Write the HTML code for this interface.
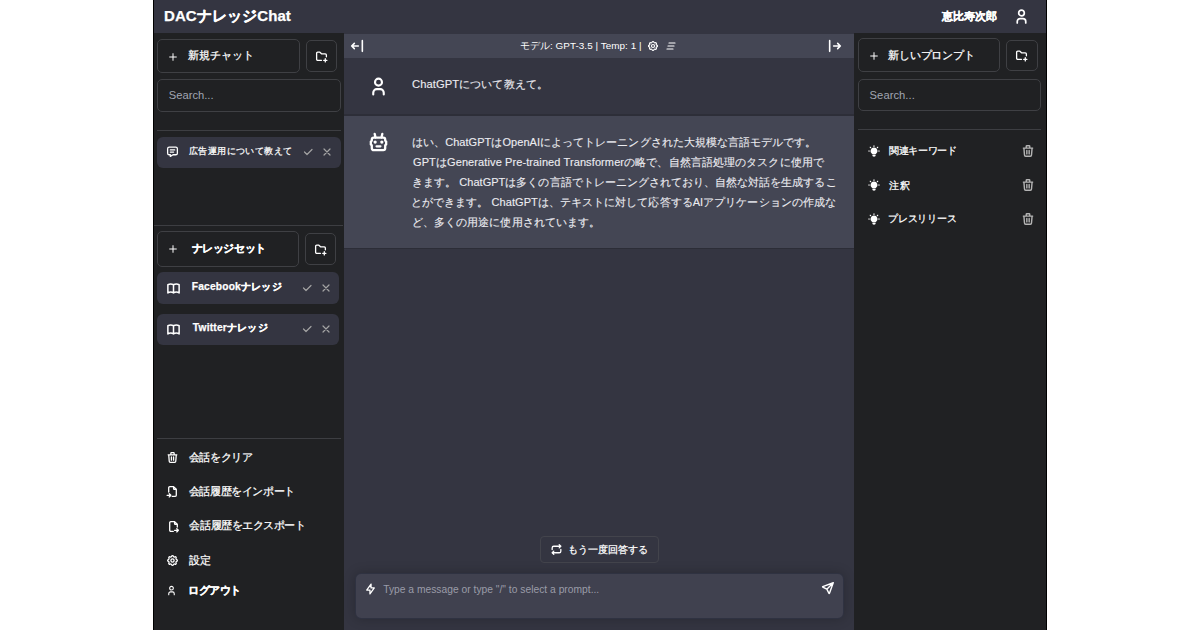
<!DOCTYPE html>
<html lang="ja">
<head>
<meta charset="utf-8">
<style>
*{box-sizing:border-box;margin:0;padding:0}
html,body{width:1200px;height:630px;overflow:hidden;background:#fff;font-family:"Liberation Sans",sans-serif;color:#fff}
.a{position:absolute}
svg{position:absolute;fill:none;stroke:#fff;stroke-width:2.4;stroke-linecap:round;stroke-linejoin:round}
.t{position:absolute;white-space:nowrap;line-height:1;-webkit-text-stroke:0.25px currentColor}
#app{position:absolute;left:153px;top:0;width:894px;height:630px;background:#343541}
#hdr{position:absolute;left:153px;top:0;width:894px;height:33px;background:#343541}
#ls{position:absolute;left:153px;top:33px;width:191px;height:597px;background:#202123}
#rs{position:absolute;left:854px;top:33px;width:193px;height:597px;background:#202123}
#chat{position:absolute;left:344px;top:33px;width:510px;height:597px;background:#343541}
.bx{position:absolute;border:1px solid #3f4044;border-radius:5px}
.item{position:absolute;background:#343541;border-radius:6px}
.ln{position:absolute;height:1px;background:#3d3e42}
</style>
</head>
<body>
<div id="app"></div>
<div id="hdr"></div>
<div class="t" style="left:164.0px;top:8px;font-size:15px;font-weight:bold;letter-spacing:0.100px">DACナレッジChat</div>
<div class="t" style="left:942.0px;top:11px;font-size:11px;font-weight:bold">恵比寿次郎</div>
<svg style="left:1012.5px;top:7.8px;width:17px;height:17px" viewBox="0 0 24 24" stroke-width="3"><path d="M8 7a4 4 0 1 0 8 0a4 4 0 0 0 -8 0M6 21v-2a4 4 0 0 1 4 -4h4a4 4 0 0 1 4 4v2"/></svg>

<!-- left sidebar -->
<div id="ls"></div>
<div class="bx" style="left:157px;top:39px;width:143px;height:34px"></div>
<svg style="left:167.5px;top:52px;width:10px;height:10px" viewBox="0 0 24 24" stroke-width="3.2"><path d="M12 4v16M4 12h16"/></svg>
<div class="t" style="left:187.6px;top:50px;font-size:11px">新規チャット</div>
<div class="bx" style="left:306px;top:40px;width:31px;height:32px"></div>
<svg style="left:315px;top:50px;width:13px;height:13px" viewBox="0 0 24 24" stroke-width="2.9"><path d="M12 19h-7a2 2 0 0 1 -2 -2v-11a2 2 0 0 1 2 -2h4l3 3h7a2 2 0 0 1 2 2v3.5M16 19h6M19 16v6"/></svg>
<div class="bx" style="left:157px;top:79px;width:184px;height:33px"></div>
<div class="t" style="left:168.8px;top:90px;font-size:11.2px;color:#a0a6b2;-webkit-text-stroke:0">Search...</div>
<div class="ln" style="left:157px;top:130px;width:184px"></div>
<div class="item" style="left:157px;top:137px;width:184px;height:31px"></div>
<svg style="left:166px;top:145px;width:13px;height:13px" viewBox="0 0 24 24" stroke-width="2.6"><path d="M8 9h8M8 13h6M18 4a3 3 0 0 1 3 3v8a3 3 0 0 1 -3 3h-5l-5 3v-3h-2a3 3 0 0 1 -3 -3v-8a3 3 0 0 1 3 -3h12z"/></svg>
<div class="t" style="left:188.8px;top:147px;font-size:9.3px;letter-spacing:0.440px">広告運用について教えて</div>
<svg style="left:302px;top:146px;width:12px;height:12px;stroke:#a3a3a3" viewBox="0 0 24 24" stroke-width="2.2"><path d="M5 12l5 5l10 -10"/></svg>
<svg style="left:321px;top:146px;width:12px;height:12px;stroke:#a3a3a3" viewBox="0 0 24 24" stroke-width="2.2"><path d="M18 6l-12 12M6 6l12 12"/></svg>

<div class="ln" style="left:154px;top:225px;width:189px"></div>
<div class="bx" style="left:157px;top:231px;width:142px;height:36px"></div>
<svg style="left:167.7px;top:244px;width:10px;height:10px" viewBox="0 0 24 24" stroke-width="3.2"><path d="M12 4v16M4 12h16"/></svg>
<div class="t" style="left:191.6px;top:243px;font-size:10.5px;font-weight:bold;letter-spacing:-0.400px">ナレッジセット</div>
<div class="bx" style="left:305px;top:233px;width:31px;height:32px"></div>
<svg style="left:314px;top:243px;width:13px;height:13px" viewBox="0 0 24 24" stroke-width="2.9"><path d="M12 19h-7a2 2 0 0 1 -2 -2v-11a2 2 0 0 1 2 -2h4l3 3h7a2 2 0 0 1 2 2v3.5M16 19h6M19 16v6"/></svg>

<div class="item" style="left:157px;top:272px;width:182px;height:32px"></div>
<svg style="left:166px;top:280.8px;width:15px;height:15px" viewBox="0 0 24 24" stroke-width="3.5"><path d="M3 19a9 9 0 0 1 9 0a9 9 0 0 1 9 0M3 6a9 9 0 0 1 9 0a9 9 0 0 1 9 0M3 6v13M12 6v13M21 6v13"/></svg>
<div class="t" style="left:191.8px;top:282px;font-size:10.2px;font-weight:bold;letter-spacing:0.200px">Facebookナレッジ</div>
<svg style="left:301px;top:282px;width:12px;height:12px;stroke:#a3a3a3" viewBox="0 0 24 24" stroke-width="2.2"><path d="M5 12l5 5l10 -10"/></svg>
<svg style="left:320px;top:282px;width:12px;height:12px;stroke:#a3a3a3" viewBox="0 0 24 24" stroke-width="2.2"><path d="M18 6l-12 12M6 6l12 12"/></svg>

<div class="item" style="left:157px;top:314px;width:182px;height:31px"></div>
<svg style="left:166px;top:321.8px;width:15px;height:15px" viewBox="0 0 24 24" stroke-width="3.5"><path d="M3 19a9 9 0 0 1 9 0a9 9 0 0 1 9 0M3 6a9 9 0 0 1 9 0a9 9 0 0 1 9 0M3 6v13M12 6v13M21 6v13"/></svg>
<div class="t" style="left:192.8px;top:323px;font-size:10.2px;font-weight:bold;letter-spacing:0.220px">Twitterナレッジ</div>
<svg style="left:301px;top:323px;width:12px;height:12px;stroke:#a3a3a3" viewBox="0 0 24 24" stroke-width="2.2"><path d="M5 12l5 5l10 -10"/></svg>
<svg style="left:320px;top:323px;width:12px;height:12px;stroke:#a3a3a3" viewBox="0 0 24 24" stroke-width="2.2"><path d="M18 6l-12 12M6 6l12 12"/></svg>

<div class="ln" style="left:157px;top:438px;width:184px"></div>
<svg style="left:166px;top:451px;width:13px;height:13px" viewBox="0 0 24 24" stroke-width="2.6"><path d="M4 7h16M10 11v6M14 11v6M5 7l1 12a2 2 0 0 0 2 2h8a2 2 0 0 0 2 -2l1 -12M9 7v-3a1 1 0 0 1 1 -1h4a1 1 0 0 1 1 1v3"/></svg>
<div class="t" style="left:188.8px;top:452px;font-size:10.5px;letter-spacing:-0.400px">会話をクリア</div>
<svg style="left:166px;top:485px;width:13px;height:13px" viewBox="0 0 24 24" stroke-width="2.6"><path d="M14 3v4a1 1 0 0 0 1 1h4M5 13v-8a2 2 0 0 1 2 -2h7l5 5v11a2 2 0 0 1 -2 2h-5.5m-9.5 -2h7m-3 -3l3 3l-3 3"/></svg>
<div class="t" style="left:188.8px;top:486px;font-size:10.5px;letter-spacing:-0.400px">会話履歴をインポート</div>
<svg style="left:167px;top:520px;width:13px;height:13px" viewBox="0 0 24 24" stroke-width="2.6"><path d="M14 3v4a1 1 0 0 0 1 1h4M11.5 21h-4.5a2 2 0 0 1 -2 -2v-14a2 2 0 0 1 2 -2h7l5 5v5m-5 6h7m-3 -3l3 3l-3 3"/></svg>
<div class="t" style="left:189.4px;top:520px;font-size:10.5px;letter-spacing:-0.440px">会話履歴をエクスポート</div>
<svg style="left:166px;top:554px;width:13px;height:13px" viewBox="0 0 24 24" stroke-width="2.8"><path d="M10.325 4.317c.426 -1.756 2.924 -1.756 3.35 0a1.724 1.724 0 0 0 2.573 1.066c1.543 -.94 3.31 .826 2.37 2.37a1.724 1.724 0 0 0 1.065 2.572c1.756 .426 1.756 2.924 0 3.35a1.724 1.724 0 0 0 -1.066 2.573c.94 1.543 -.826 3.31 -2.37 2.37a1.724 1.724 0 0 0 -2.572 1.065c-.426 1.756 -2.924 1.756 -3.35 0a1.724 1.724 0 0 0 -2.573 -1.066c-1.543 .94 -3.31 -.826 -2.37 -2.37a1.724 1.724 0 0 0 -1.065 -2.572c-1.756 -.426 -1.756 -2.924 0 -3.35a1.724 1.724 0 0 0 1.066 -2.573c-.94 -1.543 .826 -3.31 2.37 -2.37c1 .608 2.296 .07 2.572 -1.065zM9 12a3 3 0 1 0 6 0a3 3 0 0 0 -6 0"/></svg>
<div class="t" style="left:189.0px;top:555px;font-size:10.5px">設定</div>
<svg style="left:166px;top:585px;width:11px;height:11px" viewBox="0 0 24 24" stroke-width="3.2"><path d="M8 7a4 4 0 1 0 8 0a4 4 0 0 0 -8 0M6 21v-2a4 4 0 0 1 4 -4h4a4 4 0 0 1 4 4v2"/></svg>
<div class="t" style="left:188.0px;top:585px;font-size:10.5px;font-weight:bold;letter-spacing:-0.500px">ログアウト</div>

<!-- chat -->
<div id="chat"></div>
<div class="a" style="left:344px;top:34px;width:510px;height:24px;background:#444654"></div>
<svg style="left:349px;top:38px;width:16px;height:16px" viewBox="0 0 24 24" stroke-width="2.4"><path d="M4 12h10M4 12l4 4M4 12l4 -4M20 4v16"/></svg>
<div class="t" style="left:519.8px;top:41px;font-size:9.9px;letter-spacing:0.052px;-webkit-text-stroke:0">モデル: GPT-3.5 | Temp: 1 |</div>
<svg style="left:647px;top:40px;width:12px;height:12px" viewBox="0 0 24 24" stroke-width="2.6"><path d="M10.325 4.317c.426 -1.756 2.924 -1.756 3.35 0a1.724 1.724 0 0 0 2.573 1.066c1.543 -.94 3.31 .826 2.37 2.37a1.724 1.724 0 0 0 1.065 2.572c1.756 .426 1.756 2.924 0 3.35a1.724 1.724 0 0 0 -1.066 2.573c.94 1.543 -.826 3.31 -2.37 2.37a1.724 1.724 0 0 0 -2.572 1.065c-.426 1.756 -2.924 1.756 -3.35 0a1.724 1.724 0 0 0 -2.573 -1.066c-1.543 .94 -3.31 -.826 -2.37 -2.37a1.724 1.724 0 0 0 -1.065 -2.572c-1.756 -.426 -1.756 -2.924 0 -3.35a1.724 1.724 0 0 0 1.066 -2.573c-.94 -1.543 .826 -3.31 2.37 -2.37c1 .608 2.296 .07 2.572 -1.065zM9 12a3 3 0 1 0 6 0a3 3 0 0 0 -6 0"/></svg>
<svg style="left:665px;top:40px;width:12px;height:12px" viewBox="0 0 24 24" stroke-width="2.4"><path d="M8 6h12M6 12h12M4 18h12"/></svg>
<svg style="left:827px;top:38px;width:16px;height:16px" viewBox="0 0 24 24" stroke-width="2.4"><path d="M20 12h-10M20 12l-4 4M20 12l-4 -4M4 4v16"/></svg>

<div class="a" style="left:344px;top:114px;width:510px;height:2px;background:#2d2e38"></div>
<svg style="left:368px;top:76px;width:21px;height:21px" viewBox="0 0 24 24" stroke-width="2.6"><path d="M8 7a4 4 0 1 0 8 0a4 4 0 0 0 -8 0M6 21v-2a4 4 0 0 1 4 -4h4a4 4 0 0 1 4 4v2"/></svg>
<div class="t" style="left:412.0px;top:79px;font-size:11.2px;color:#ececf1;letter-spacing:0.086px;-webkit-text-stroke:0.12px currentColor">ChatGPTについて教えて。</div>

<div class="a" style="left:344px;top:116px;width:510px;height:132px;background:#444654"></div>
<div class="a" style="left:344px;top:248px;width:510px;height:1px;background:#2c2d37"></div>
<svg style="left:367px;top:131px;width:23px;height:23px" viewBox="0 0 24 24" stroke-width="2.6"><path d="M7 7h10a2 2 0 0 1 2 2v1l1 1v3l-1 1v3a2 2 0 0 1 -2 2h-10a2 2 0 0 1 -2 -2v-3l-1 -1v-3l1 -1v-1a2 2 0 0 1 2 -2zM10 16h4M8.5 11.5m-.5 0a.5 .5 0 1 0 1 0a.5 .5 0 1 0 -1 0M15.5 11.5m-.5 0a.5 .5 0 1 0 1 0a.5 .5 0 1 0 -1 0M9 7l-1 -4M15 7l1 -4"/></svg>
<div class="t" style="left:412.0px;top:137px;font-size:11px;color:#ececf1;letter-spacing:0.054px;-webkit-text-stroke:0.12px currentColor">はい、ChatGPTはOpenAIによってトレーニングされた大規模な言語モデルです。</div>
<div class="t" style="left:413.0px;top:157px;font-size:11px;color:#ececf1;letter-spacing:0.102px;-webkit-text-stroke:0.12px currentColor">GPTはGenerative Pre-trained Transformerの略で、自然言語処理のタスクに使用で</div>
<div class="t" style="left:412.0px;top:177px;font-size:11px;color:#ececf1;letter-spacing:0.039px;-webkit-text-stroke:0.12px currentColor">きます。 ChatGPTは多くの言語でトレーニングされており、自然な対話を生成するこ</div>
<div class="t" style="left:411.0px;top:197px;font-size:11px;color:#ececf1;letter-spacing:0.062px;-webkit-text-stroke:0.12px currentColor">とができます。 ChatGPTは、テキストに対して応答するAIアプリケーションの作成な</div>
<div class="t" style="left:412.0px;top:217px;font-size:11px;color:#ececf1;letter-spacing:0.062px;-webkit-text-stroke:0.12px currentColor">ど、多くの用途に使用されています。</div>

<div class="bx" style="left:540px;top:536px;width:119px;height:27px;border-color:#43444c;border-radius:4px"></div>
<svg style="left:550px;top:543px;width:13px;height:13px" viewBox="0 0 24 24" stroke-width="2.6"><path d="M4 12v-3a3 3 0 0 1 3 -3h13m-3 -3l3 3l-3 3M20 12v3a3 3 0 0 1 -3 3h-13m3 3l-3 -3l3 -3"/></svg>
<div class="t" style="left:568.2px;top:545px;font-size:9.6px">もう一度回答する</div>

<div class="a" style="left:355px;top:573px;width:489px;height:46px;background:#40414f;border-radius:6px;border:1px solid rgba(17,24,39,0.35);box-shadow:0 0 12px rgba(0,0,0,0.22)"></div>
<svg style="left:364px;top:582px;width:13px;height:14px" viewBox="0 0 24 24" stroke="#c5c6cc" stroke-width="2"><path d="M13 3v7h6l-8 11v-7h-6l8 -11"/></svg>
<div class="t" style="left:383.2px;top:585px;font-size:10.25px;color:#9a9ca8;letter-spacing:0.017px;-webkit-text-stroke:0">Type a message or type "/" to select a prompt...</div>
<svg style="left:821px;top:581px;width:14px;height:14px" viewBox="0 0 24 24" stroke="#c8c9d0" stroke-width="2"><path d="M10 14l11 -11M21 3l-6.5 18a.55 .55 0 0 1 -1 0l-3.5 -7l-7 -3.5a.55 .55 0 0 1 0 -1l18 -6.5"/></svg>

<!-- right sidebar -->
<div id="rs"></div>
<div class="bx" style="left:858px;top:38px;width:142px;height:34px"></div>
<svg style="left:869px;top:50.5px;width:10px;height:10px" viewBox="0 0 24 24" stroke-width="3.2"><path d="M12 4v16M4 12h16"/></svg>
<div class="t" style="left:888.4px;top:50px;font-size:11px;letter-spacing:-0.229px">新しいプロンプト</div>
<div class="bx" style="left:1006px;top:40px;width:32px;height:31px"></div>
<svg style="left:1015px;top:49px;width:13px;height:13px" viewBox="0 0 24 24" stroke-width="2.9"><path d="M12 19h-7a2 2 0 0 1 -2 -2v-11a2 2 0 0 1 2 -2h4l3 3h7a2 2 0 0 1 2 2v3.5M16 19h6M19 16v6"/></svg>
<div class="bx" style="left:858px;top:79px;width:183px;height:32px"></div>
<div class="t" style="left:869.6px;top:90px;font-size:11.2px;color:#a0a6b2;letter-spacing:0.050px;-webkit-text-stroke:0">Search...</div>
<div class="ln" style="left:858px;top:129px;width:183px"></div>
<div class="t" style="left:889.0px;top:146px;font-size:10px;letter-spacing:-0.333px">関連キーワード</div>
<div class="t" style="left:889.0px;top:181px;font-size:10px;letter-spacing:0.800px">注釈</div>
<div class="t" style="left:888.0px;top:214px;font-size:10px;letter-spacing:-0.167px">プレスリリース</div>

<svg style="left:867px;top:144px;width:14px;height:14px;stroke:none;fill:#fff" viewBox="0 0 24 24"><path d="M4 11a1 1 0 0 1 .117 1.993l-.117 .007h-1a1 1 0 0 1 -.117 -1.993l.117 -.007h1z"/><path d="M12 2a1 1 0 0 1 .993 .883l.007 .117v1a1 1 0 0 1 -1.993 .117l-.007 -.117v-1a1 1 0 0 1 1 -1z"/><path d="M21 11a1 1 0 0 1 .117 1.993l-.117 .007h-1a1 1 0 0 1 -.117 -1.993l.117 -.007h1z"/><path d="M4.893 4.893a1 1 0 0 1 1.32 -.083l.094 .083l.7 .7a1 1 0 0 1 -1.32 1.497l-.094 -.083l-.7 -.7a1 1 0 0 1 0 -1.414z"/><path d="M17.693 4.893a1 1 0 0 1 1.497 1.32l-.083 .094l-.7 .7a1 1 0 0 1 -1.497 -1.32l.083 -.094l.7 -.7z"/><path d="M14 18a1 1 0 0 1 1 1a3 3 0 0 1 -6 0a1 1 0 0 1 .883 -.993l.117 -.007h4z"/><path d="M12 6a6 6 0 0 1 3.6 10.8a1 1 0 0 1 -.471 .192l-.129 .008h-6a1 1 0 0 1 -.6 -.2a6 6 0 0 1 3.6 -10.8z"/></svg>
<svg style="left:1021px;top:144px;width:14px;height:14px;stroke:#b4b4b4" viewBox="0 0 24 24"><path d="M4 7h16M10 11v6M14 11v6M5 7l1 12a2 2 0 0 0 2 2h8a2 2 0 0 0 2 -2l1 -12M9 7v-3a1 1 0 0 1 1 -1h4a1 1 0 0 1 1 1v3"/></svg>
<svg style="left:867px;top:178px;width:14px;height:14px;stroke:none;fill:#fff" viewBox="0 0 24 24"><path d="M4 11a1 1 0 0 1 .117 1.993l-.117 .007h-1a1 1 0 0 1 -.117 -1.993l.117 -.007h1z"/><path d="M12 2a1 1 0 0 1 .993 .883l.007 .117v1a1 1 0 0 1 -1.993 .117l-.007 -.117v-1a1 1 0 0 1 1 -1z"/><path d="M21 11a1 1 0 0 1 .117 1.993l-.117 .007h-1a1 1 0 0 1 -.117 -1.993l.117 -.007h1z"/><path d="M4.893 4.893a1 1 0 0 1 1.32 -.083l.094 .083l.7 .7a1 1 0 0 1 -1.32 1.497l-.094 -.083l-.7 -.7a1 1 0 0 1 0 -1.414z"/><path d="M17.693 4.893a1 1 0 0 1 1.497 1.32l-.083 .094l-.7 .7a1 1 0 0 1 -1.497 -1.32l.083 -.094l.7 -.7z"/><path d="M14 18a1 1 0 0 1 1 1a3 3 0 0 1 -6 0a1 1 0 0 1 .883 -.993l.117 -.007h4z"/><path d="M12 6a6 6 0 0 1 3.6 10.8a1 1 0 0 1 -.471 .192l-.129 .008h-6a1 1 0 0 1 -.6 -.2a6 6 0 0 1 3.6 -10.8z"/></svg>
<svg style="left:1021px;top:178px;width:14px;height:14px;stroke:#b4b4b4" viewBox="0 0 24 24"><path d="M4 7h16M10 11v6M14 11v6M5 7l1 12a2 2 0 0 0 2 2h8a2 2 0 0 0 2 -2l1 -12M9 7v-3a1 1 0 0 1 1 -1h4a1 1 0 0 1 1 1v3"/></svg>
<svg style="left:867px;top:212px;width:14px;height:14px;stroke:none;fill:#fff" viewBox="0 0 24 24"><path d="M4 11a1 1 0 0 1 .117 1.993l-.117 .007h-1a1 1 0 0 1 -.117 -1.993l.117 -.007h1z"/><path d="M12 2a1 1 0 0 1 .993 .883l.007 .117v1a1 1 0 0 1 -1.993 .117l-.007 -.117v-1a1 1 0 0 1 1 -1z"/><path d="M21 11a1 1 0 0 1 .117 1.993l-.117 .007h-1a1 1 0 0 1 -.117 -1.993l.117 -.007h1z"/><path d="M4.893 4.893a1 1 0 0 1 1.32 -.083l.094 .083l.7 .7a1 1 0 0 1 -1.32 1.497l-.094 -.083l-.7 -.7a1 1 0 0 1 0 -1.414z"/><path d="M17.693 4.893a1 1 0 0 1 1.497 1.32l-.083 .094l-.7 .7a1 1 0 0 1 -1.497 -1.32l.083 -.094l.7 -.7z"/><path d="M14 18a1 1 0 0 1 1 1a3 3 0 0 1 -6 0a1 1 0 0 1 .883 -.993l.117 -.007h4z"/><path d="M12 6a6 6 0 0 1 3.6 10.8a1 1 0 0 1 -.471 .192l-.129 .008h-6a1 1 0 0 1 -.6 -.2a6 6 0 0 1 3.6 -10.8z"/></svg>
<svg style="left:1021px;top:212px;width:14px;height:14px;stroke:#b4b4b4" viewBox="0 0 24 24"><path d="M4 7h16M10 11v6M14 11v6M5 7l1 12a2 2 0 0 0 2 2h8a2 2 0 0 0 2 -2l1 -12M9 7v-3a1 1 0 0 1 1 -1h4a1 1 0 0 1 1 1v3"/></svg>
<div class="a" style="left:153px;top:0;width:1px;height:630px;background:#000"></div>
<div class="a" style="left:1046px;top:0;width:1px;height:630px;background:#000"></div>
</body>
</html>
